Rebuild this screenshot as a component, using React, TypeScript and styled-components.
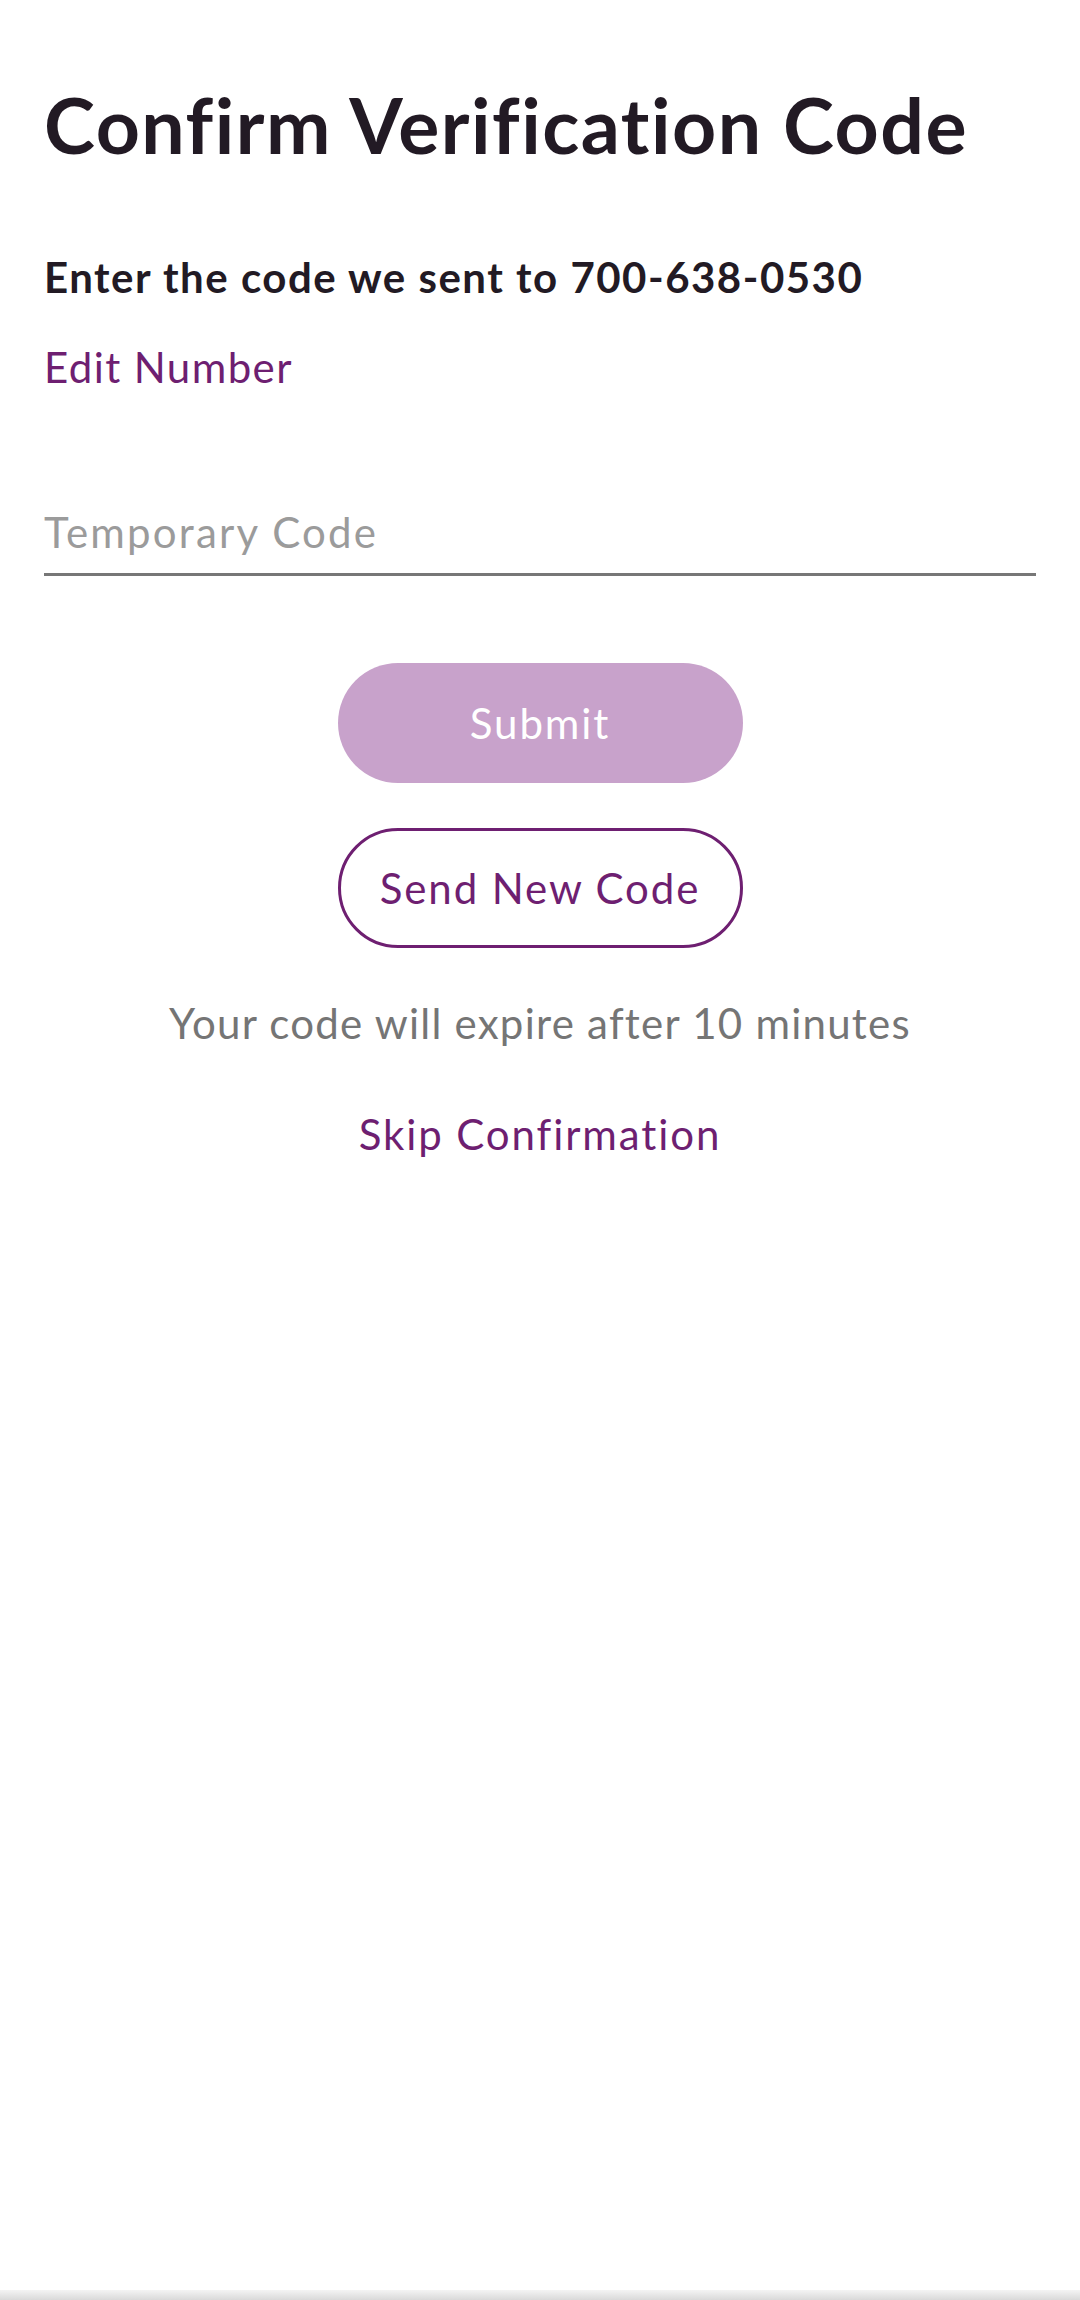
import React from "react";
import styled, { createGlobalStyle } from "styled-components";

const GlobalStyle = createGlobalStyle`
  html, body {
    margin: 0;
    padding: 0;
    background: #ffffff;
  }
  body {
    font-family: Lato, "Noto Sans", sans-serif;
  }
  * { box-sizing: border-box; }
`;

const Page = styled.div`
  min-height: 100vh;
  display: flex;
  flex-direction: column;
  background: #ffffff;
`;

const Content = styled.main`
  flex: 1;
  display: flex;
  flex-direction: column;
  padding: 79px 44px 0 44px;
`;

const Title = styled.h1`
  margin: 0;
  font-size: 77px;
  line-height: 90px;
  font-weight: 700;
  color: #221a24;
  letter-spacing: 1.5px;
`;

const Subtitle = styled.p`
  margin: 83px 0 0 0;
  font-size: 42px;
  line-height: 50px;
  font-weight: 700;
  color: #221a24;
  letter-spacing: 1.5px;
`;

const TextLink = styled.a<{ $center?: boolean }>`
  display: block;
  font-size: 42px;
  line-height: 50px;
  font-weight: 400;
  color: #6e1f71;
  text-decoration: none;
  cursor: pointer;
  letter-spacing: 1.7px;
  text-align: ${(p) => (p.$center ? "center" : "left")};
`;

const EditLink = styled(TextLink)`
  margin-top: 40px;
  align-self: flex-start;
  letter-spacing: 1.4px;
`;

const CodeInput = styled.input`
  margin-top: 115px;
  width: 100%;
  border: none;
  border-bottom: 3px solid #777777;
  padding: 0 0 16px 0;
  height: 69px;
  font-family: Lato, "Noto Sans", sans-serif;
  font-size: 42px;
  line-height: 50px;
  letter-spacing: 2.2px;
  color: #221a24;
  background: transparent;
  outline: none;
  &::placeholder {
    color: #9b9b9b;
  }
`;

const Actions = styled.div`
  display: flex;
  flex-direction: column;
  align-items: center;
  margin-top: 87px;
`;

const PillButton = styled.button<{ $variant: "filled" | "outline" }>`
  width: 405px;
  height: 120px;
  border-radius: 60px;
  font-family: Lato, "Noto Sans", sans-serif;
  font-size: 42px;
  font-weight: 400;
  letter-spacing: 1.9px;
  display: flex;
  align-items: center;
  justify-content: center;
  cursor: pointer;
  background: ${(p) => (p.$variant === "filled" ? "#c8a2cb" : "#ffffff")};
  color: ${(p) => (p.$variant === "filled" ? "#ffffff" : "#6e1f71")};
  border: ${(p) => (p.$variant === "filled" ? "none" : "3px solid #6e1f71")};
  & + & {
    margin-top: 45px;
  }
`;

const ExpireNote = styled.p`
  margin: 50px 0 0 0;
  font-size: 42px;
  line-height: 50px;
  color: #757575;
  text-align: center;
  letter-spacing: 1.25px;
`;

const SkipLink = styled(TextLink)`
  margin-top: 61px;
  letter-spacing: 1.9px;
`;

const BottomShadow = styled.div`
  height: 10px;
  background: linear-gradient(to bottom, #f4f4f4, #d9d9d9);
`;

export default function App() {
  return (
    <Page>
      <GlobalStyle />
      <Content>
        <Title>Confirm Verification Code</Title>
        <Subtitle>Enter the code we sent to 700-638-0530</Subtitle>
        <EditLink>Edit Number</EditLink>
        <CodeInput placeholder="Temporary Code" />
        <Actions>
          <PillButton $variant="filled">Submit</PillButton>
          <PillButton $variant="outline">Send New Code</PillButton>
        </Actions>
        <ExpireNote>Your code will expire after 10 minutes</ExpireNote>
        <SkipLink $center>Skip Confirmation</SkipLink>
      </Content>
      <BottomShadow />
    </Page>
  );
}
